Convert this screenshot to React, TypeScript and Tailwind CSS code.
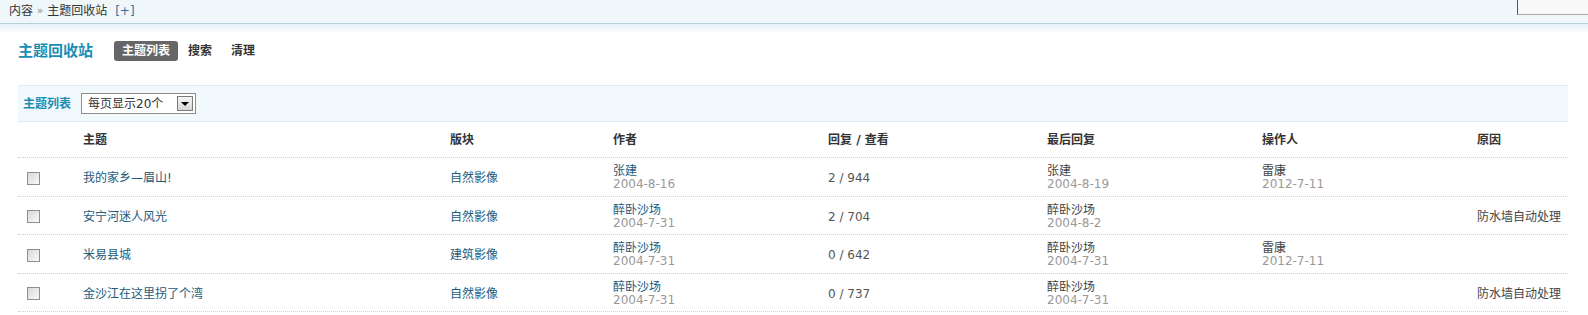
import React from 'react';

const font = { fontFamily: "Verdana, 'DejaVu Sans', 'Noto Sans CJK SC', sans-serif" };

type Row = {
  title: string;
  forum: string;
  author: string;
  date: string;
  counts: string;
  lastName: string;
  lastDate: string;
  op?: string;
  opDate?: string;
  reason?: string;
};

const rows: Row[] = [
  { title: '我的家乡—眉山!', forum: '自然影像', author: '张建', date: '2004-8-16', counts: '2 / 944', lastName: '张建', lastDate: '2004-8-19', op: '雷康', opDate: '2012-7-11' },
  { title: '安宁河迷人风光', forum: '自然影像', author: '醉卧沙场', date: '2004-7-31', counts: '2 / 704', lastName: '醉卧沙场', lastDate: '2004-8-2', reason: '防水墙自动处理' },
  { title: '米易县城', forum: '建筑影像', author: '醉卧沙场', date: '2004-7-31', counts: '0 / 642', lastName: '醉卧沙场', lastDate: '2004-7-31', op: '雷康', opDate: '2012-7-11' },
  { title: '金沙江在这里拐了个湾', forum: '自然影像', author: '醉卧沙场', date: '2004-7-31', counts: '0 / 737', lastName: '醉卧沙场', lastDate: '2004-7-31', reason: '防水墙自动处理' },
];

const cols = 'grid grid-cols-[65px_367px_163px_215px_219px_215px_215px_1fr]';

function Stacked({ name, date, link }: { name: string; date: string; link?: boolean }) {
  return (
    <div className="flex flex-col leading-[13px]">
      <span className={link ? 'text-[#235b7c]' : 'text-[#444]'}>{name}</span>
      <span className="text-[#999]">{date}</span>
    </div>
  );
}

export default function App() {
  return (
    <div className="w-[1588px] h-[315px] bg-white text-[12px] text-[#333] overflow-hidden" style={font}>
      <div className="relative h-[24px] bg-[#eff7fb] border-b border-[#b6cfd8] flex items-center pl-[9px] pb-[2px]">
        <span>内容</span>
        <span className="mx-[4px] text-[#888] text-[10px]">»</span>
        <span>主题回收站</span>
        <span className="ml-[8px] text-[#2f6fa3]">[+]</span>
        <div className="absolute right-0 top-0 w-[71px] h-[15px] bg-[#f8f8f8] border-l border-b border-l-[#555] border-b-[#aaa]" />
      </div>
      <div className="h-[10px] bg-gradient-to-b from-[#e4f1f8] to-white" />

      <div className="flex items-center h-[20px] mt-[7px] pl-[18px]">
        <h3 className="text-[15px] font-bold text-[#1a8db4] mr-[21px]">主题回收站</h3>
        <span className="h-[20px] px-[8px] flex items-center rounded-[3px] bg-[#666] text-white font-bold">主题列表</span>
        <span className="ml-[10px] font-bold">搜索</span>
        <span className="ml-[19px] font-bold">清理</span>
      </div>

      <div className="ml-[18px] mr-[20px] mt-[24px]">
        <div className="h-[37px] bg-[#f2f9fd] border-y border-[#e1ecf2] flex items-center pl-[5px]">
          <span className="font-bold text-[#1a8db4]">主题列表</span>
          <div className="ml-[10px] w-[115px] h-[21px] border border-[#8d8d8d] bg-white flex items-center justify-between pl-[6px] pr-[2px]">
            <span>每页显示20个</span>
            <span className="w-[16px] h-[15px] border border-[#7a7a7a] bg-gradient-to-b from-[#f4f4f4] to-[#d6d6d6] flex items-center justify-center">
              <span className="w-0 h-0 border-l-[4px] border-r-[4px] border-t-[4px] border-l-transparent border-r-transparent border-t-black" />
            </span>
          </div>
        </div>

        <div className={`${cols} h-[36px] items-center border-b border-dotted border-[#d2d2d2] font-bold text-[#333]`}>
          <div />
          <div>主题</div>
          <div>版块</div>
          <div>作者</div>
          <div>回复 / 查看</div>
          <div>最后回复</div>
          <div>操作人</div>
          <div>原因</div>
        </div>

        {rows.map((r) => (
          <div key={r.title} className={`${cols} h-[38.5px] items-center pt-[3px] border-b border-dotted border-[#d2d2d2]`}>
            <div className="pl-[9px] flex">
              <input
                type="checkbox"
                className="appearance-none w-[13px] h-[13px] border border-[#8f8f8f] bg-gradient-to-br from-[#d8d8d8] to-[#fafafa] m-0"
              />
            </div>
            <div className="text-[#235b7c]">{r.title}</div>
            <div className="text-[#235b7c]">{r.forum}</div>
            <Stacked name={r.author} date={r.date} link />
            <div className="text-[#555]">{r.counts}</div>
            <Stacked name={r.lastName} date={r.lastDate} />
            <div>{r.op ? <Stacked name={r.op} date={r.opDate ?? ''} /> : null}</div>
            <div className="text-[#444]">{r.reason ?? ''}</div>
          </div>
        ))}
      </div>
    </div>
  );
}
